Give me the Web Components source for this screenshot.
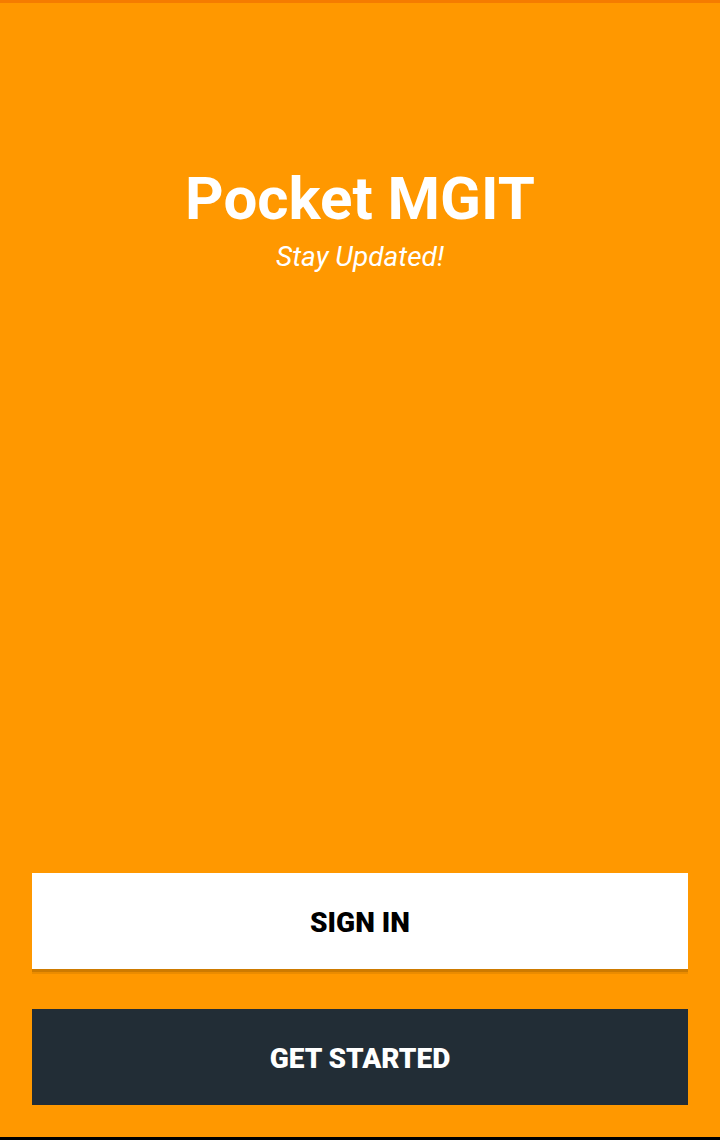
<!DOCTYPE html>
<html lang="en">
<head>
<meta charset="utf-8">
<meta name="viewport" content="width=device-width, initial-scale=1">
<title>Pocket MGIT</title>
<style>
  html, body { margin: 0; }
  body { font-family: Roboto, sans-serif; background: #ff9800; }
</style>
</head>
<body>
<welcome-screen>
  <app-brand slot="brand" tagline="Stay Updated!">Pocket MGIT</app-brand>
  <action-button slot="actions" variant="light">SIGN IN</action-button>
  <action-button slot="actions" variant="dark">GET STARTED</action-button>
</welcome-screen>
<script>
  class WelcomeScreen extends HTMLElement {
    constructor() {
      super();
      this.attachShadow({ mode: 'open' }).innerHTML = `
        <style>
          :host {
            display: flex; flex-direction: column; justify-content: space-between;
            box-sizing: border-box; min-height: 100vh; padding: 160px 32px 32px;
            border-top: 3px solid #f57c00; border-bottom: 3px solid #000;
            background: #ff9800;
          }
          .actions { display: flex; flex-direction: column; gap: 40px; }
        </style>
        <main><slot name="brand"></slot></main>
        <div class="actions"><slot name="actions"></slot></div>`;
    }
  }
  class AppBrand extends HTMLElement {
    constructor() {
      super();
      this.attachShadow({ mode: 'open' }).innerHTML = `
        <style>
          :host { display: block; text-align: center; color: #fff; }
          h1 { margin: 0; font-size: 60px; line-height: 72px; font-weight: 700; }
          p { margin: 4px 0 0; font-size: 28px; line-height: 36px; font-style: italic; }
        </style>
        <h1><slot></slot></h1>
        <p></p>`;
    }
    connectedCallback() {
      this.shadowRoot.querySelector('p').textContent = this.getAttribute('tagline');
    }
  }
  class ActionButton extends HTMLElement {
    constructor() {
      super();
      this.attachShadow({ mode: 'open' }).innerHTML = `
        <style>
          :host { display: block; }
          button {
            display: block; width: 100%; height: 96px; margin: 0; padding: 4px 0 0;
            border: 0; font: 900 28px/32px Roboto, sans-serif; cursor: pointer;
          }
          :host([variant="light"]) button {
            background: #fff; color: #000;
            box-shadow: 0 3px 0 rgba(0, 0, 0, .12), 0 5px 0 rgba(0, 0, 0, .08);
          }
          :host([variant="dark"]) button { background: #222d36; color: #fff; }
        </style>
        <button type="button"><slot></slot></button>`;
    }
  }
  customElements.define('action-button', ActionButton);
  customElements.define('app-brand', AppBrand);
  customElements.define('welcome-screen', WelcomeScreen);
</script>
</body>
</html>
